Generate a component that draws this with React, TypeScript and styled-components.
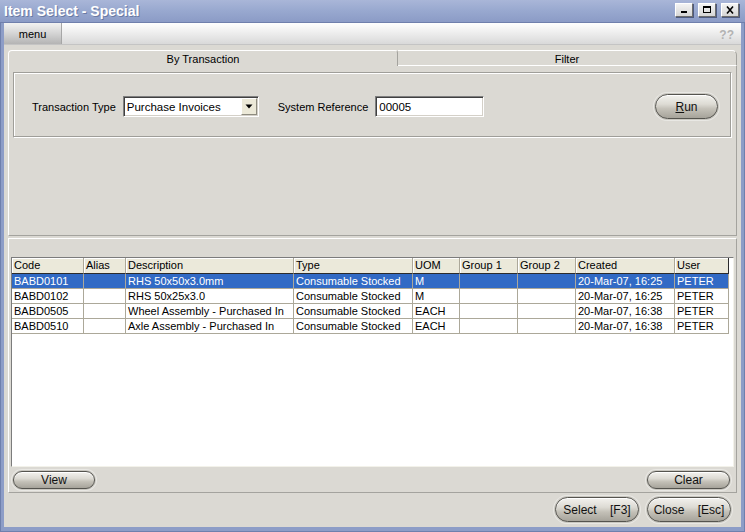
import React from "react";
import styled, { createGlobalStyle } from "styled-components";

const Global = createGlobalStyle`
  html, body { margin: 0; padding: 0; background: #ffffff; }
  body { font-family: "Liberation Sans", Arial, sans-serif; font-size: 11px; color: #000; }
  * { box-sizing: border-box; }
`;

const Window = styled.div`
  width: 745px;
  height: 532px;
  background: #8d9dc7;
  box-shadow: inset 1px 0 0 #6f80ad, inset -1px 0 0 #6f80ad, inset 0 -1px 0 #6f80ad;
  display: flex;
  flex-direction: column;
`;

const TitleBar = styled.div`
  height: 23px;
  flex: none;
  background: linear-gradient(#a9b6d8, #98a8cf 50%, #8b9bc6);
  border-bottom: 1px solid #6f7fac;
  display: flex;
  align-items: center;
  justify-content: space-between;
  padding: 0 6px 1px 4px;
`;

const Title = styled.div`
  font-family: "Liberation Sans", Arial, sans-serif;
  font-weight: bold;
  font-size: 14px;
  color: #ffffff;
  text-shadow: 1px 1px 0 #6a7aa3;
`;

const WinButtons = styled.div`
  display: flex;
  gap: 5px;
  margin-top: -1px;
`;

const WinButton = styled.div`
  width: 18px;
  height: 14px;
  background: linear-gradient(#f4f4f4, #d6d6d6);
  border: 1px solid;
  border-color: #ffffff #6d6d6d #6d6d6d #ffffff;
  box-shadow: 1px 1px 0 #4d5a80;
  display: flex;
  align-items: center;
  justify-content: center;
`;

const Body = styled.div`
  flex: 1;
  margin: 0 4px 5px 4px;
  background: #dbd9d3;
  display: flex;
  flex-direction: column;
`;

const MenuBar = styled.div`
  height: 22px;
  flex: none;
  background: linear-gradient(#fefefe, #f0f0f0 40%, #d9d9d9);
  border-bottom: 1px solid #c4c4c4;
  display: flex;
  align-items: stretch;
  justify-content: space-between;
`;

const MenuButton = styled.div`
  width: 58px;
  background: linear-gradient(#f2f2f2, #d4d4d4 50%, #b4b4b4);
  border-right: 1px solid #a6a6a6;
  display: flex;
  align-items: center;
  justify-content: center;
  padding-top: 1px;
`;

const Help = styled.div`
  color: #b3b3b3;
  font-size: 12px;
  font-weight: bold;
  display: flex;
  align-items: center;
  padding: 2px 7px 0 0;
`;

const Content = styled.div`
  flex: 1;
  display: flex;
  flex-direction: column;
  padding: 5px 4px 0 4px;
`;

const TabStrip = styled.div`
  display: flex;
  height: 16px;
`;

const Tab = styled.div<{ $active?: boolean; $w: number }>`
  width: ${(p) => p.$w}px;
  border-top: 1px solid #ffffff;
  ${(p) =>
    p.$active
      ? `border-left: 1px solid #ffffff; border-right: 1px solid #a4a39e; border-radius: 4px 3px 0 0;`
      : `border-right: 1px solid #a4a39e; border-bottom: 1px solid #ffffff; border-radius: 0 5px 0 0;`}
  display: flex;
  align-items: center;
  justify-content: center;
  padding-top: 1px;
`;

const TabPanel = styled.div`
  height: 170px;
  border-left: 1px solid #ffffff;
  border-right: 1px solid #a4a39e;
  border-bottom: 1px solid #a4a39e;
  padding: 6px 4px 0 4px;
`;

const GroupBox = styled.div`
  height: 66px;
  border: 1px solid;
  border-color: #9f9e99 #ffffff #ffffff #9f9e99;
  box-shadow: inset -1px -1px 0 #9f9e99, inset 1px 1px 0 #ffffff;
  display: flex;
  align-items: center;
  padding: 3px 13px 0 18px;
`;

const Label = styled.span<{ $ml?: number }>`
  margin-left: ${(p) => p.$ml ?? 0}px;
  margin-right: 7px;
`;

const Field = styled.div<{ $w: number }>`
  width: ${(p) => p.$w}px;
  height: 21px;
  background: #ffffff;
  border: 1px solid;
  border-color: #7f7f7f #ffffff #ffffff #7f7f7f;
  box-shadow: inset 1px 1px 0 #404040, inset -1px -1px 0 #d4d0c8;
  display: flex;
  align-items: center;
  padding-left: 3px;
`;

const FieldText = styled.span`
  flex: 1;
  font-size: 11.5px;
`;

const DropButton = styled.div`
  width: 16px;
  height: 17px;
  margin-right: 1px;
  background: #ece9d8;
  border: 1px solid;
  border-color: #ffffff #8e8c80 #8e8c80 #ffffff;
  display: flex;
  align-items: center;
  justify-content: center;
`;

const Spacer = styled.div`
  flex: 1;
`;

const Pill = styled.div<{ $w: number; $h: number }>`
  width: ${(p) => p.$w}px;
  height: ${(p) => p.$h}px;
  border-radius: ${(p) => p.$h / 2}px;
  border: 1px solid #55544f;
  background: linear-gradient(#f3f2ee, #dddbd4 40%, #c4c1b8 60%, #a6a39a);
  box-shadow: 0 0 0 1px #c9c7c0, 0 0 0 2px #e9e8e4, inset 0 1px 0 #ffffff;
  display: flex;
  align-items: center;
  justify-content: center;
  white-space: pre;
  font-size: 12px;
  color: #111;
`;

const LowerPanel = styled.div`
  margin-top: 2px;
  height: 255px;
  border: 1px solid;
  border-color: #ffffff #a4a39e #a4a39e #ffffff;
  display: flex;
  flex-direction: column;
  padding: 18px 2px 0 2px;
`;

const GridBox = styled.div`
  height: 210px;
  background: #ffffff;
  border: 1px solid;
  border-color: #7c7c7c #f3f2ea #f3f2ea #7c7c7c;
  padding: 0 4px 0 0;
`;

const cols = "72px 42px 168px 119px 47px 58px 58px 99px 54px";

const HeaderRow = styled.div`
  display: grid;
  grid-template-columns: ${cols};
  height: 16px;
  background: #dbd9d3;
`;

const HeaderCell = styled.div<{ $last?: boolean }>`
  background: #ebe9da;
  border-right: 1px solid ${(p) => (p.$last ? "#2b2b2b" : "#aca899")};
  border-bottom: 1px solid #2b2b2b;
  box-shadow: inset 1px 1px 0 #ffffff;
  padding: 1px 0 0 2px;
  font-size: 11px;
  line-height: 13px;
  white-space: nowrap;
  overflow: hidden;
`;

const Row = styled.div<{ $sel?: boolean }>`
  display: grid;
  grid-template-columns: ${cols};
  height: 15px;
  background: ${(p) => (p.$sel ? "#316ac5" : "#ffffff")};
  color: ${(p) => (p.$sel ? "#ffffff" : "#000000")};
`;

const Cell = styled.div`
  border-right: 1px solid #aca899;
  border-bottom: 1px solid #aca899;
  padding: 1px 0 0 2px;
  font-size: 11px;
  line-height: 13px;
  white-space: nowrap;
  overflow: hidden;
`;

const PanelButtons = styled.div`
  display: flex;
  justify-content: space-between;
  padding: 4px 4px 0 2px;
`;

const Footer = styled.div`
  flex: 1;
  display: flex;
  justify-content: flex-end;
  align-items: center;
  gap: 8px;
  padding: 0 6px 1px 0;
`;

const headers = ["Code", "Alias", "Description", "Type", "UOM", "Group 1", "Group 2", "Created", "User"];
const rows = [
  ["BABD0101", "", "RHS 50x50x3.0mm", "Consumable Stocked", "M", "", "", "20-Mar-07, 16:25", "PETER"],
  ["BABD0102", "", "RHS 50x25x3.0", "Consumable Stocked", "M", "", "", "20-Mar-07, 16:25", "PETER"],
  ["BABD0505", "", "Wheel Assembly - Purchased In", "Consumable Stocked", "EACH", "", "", "20-Mar-07, 16:38", "PETER"],
  ["BABD0510", "", "Axle Assembly - Purchased In", "Consumable Stocked", "EACH", "", "", "20-Mar-07, 16:38", "PETER"],
];

export default function App() {
  return (
    <>
      <Global />
      <Window>
        <TitleBar>
          <Title>Item Select - Special</Title>
          <WinButtons>
            <WinButton>
              <svg width="10" height="10" viewBox="0 0 10 10">
                <rect x="2" y="6" width="6" height="2" fill="#000" />
              </svg>
            </WinButton>
            <WinButton>
              <svg width="10" height="10" viewBox="0 0 10 10">
                <rect x="1.5" y="1.5" width="7" height="6" fill="none" stroke="#000" strokeWidth="1" />
                <rect x="1" y="1" width="8" height="2" fill="#000" />
              </svg>
            </WinButton>
            <WinButton>
              <svg width="10" height="10" viewBox="0 0 10 10">
                <path d="M2 1.5 L8 8.5 M8 1.5 L2 8.5" stroke="#000" strokeWidth="1.6" />
              </svg>
            </WinButton>
          </WinButtons>
        </TitleBar>
        <Body>
          <MenuBar>
            <MenuButton>menu</MenuButton>
            <Help>??</Help>
          </MenuBar>
          <Content>
            <TabStrip>
              <Tab $active $w={390}>By Transaction</Tab>
              <Tab $w={339}>Filter</Tab>
            </TabStrip>
            <TabPanel>
              <GroupBox>
                <Label>Transaction Type</Label>
                <Field $w={136}>
                  <FieldText>Purchase Invoices</FieldText>
                  <DropButton>
                    <svg width="8" height="5" viewBox="0 0 8 5">
                      <path d="M0.5 0.5 H7.5 L4 4.5 Z" fill="#000" />
                    </svg>
                  </DropButton>
                </Field>
                <Label $ml={19}>System Reference</Label>
                <Field $w={109}>
                  <FieldText>00005</FieldText>
                </Field>
                <Spacer />
                <Pill $w={63} $h={25}>
                  <span>
                    <u>R</u>un
                  </span>
                </Pill>
              </GroupBox>
            </TabPanel>
            <LowerPanel>
              <GridBox>
                <HeaderRow>
                  {headers.map((h, i) => (
                    <HeaderCell key={h} $last={i === headers.length - 1}>
                      {h}
                    </HeaderCell>
                  ))}
                </HeaderRow>
                {rows.map((r, i) => (
                  <Row key={i} $sel={i === 0}>
                    {r.map((c, j) => (
                      <Cell key={j}>{c}</Cell>
                    ))}
                  </Row>
                ))}
              </GridBox>
              <PanelButtons>
                <Pill $w={82} $h={18}>View</Pill>
                <Pill $w={83} $h={18}>Clear</Pill>
              </PanelButtons>
            </LowerPanel>
            <Footer>
              <Pill $w={84} $h={25}>{"Select    [F3]"}</Pill>
              <Pill $w={84} $h={25}>{"Close    [Esc]"}</Pill>
            </Footer>
          </Content>
        </Body>
      </Window>
    </>
  );
}
